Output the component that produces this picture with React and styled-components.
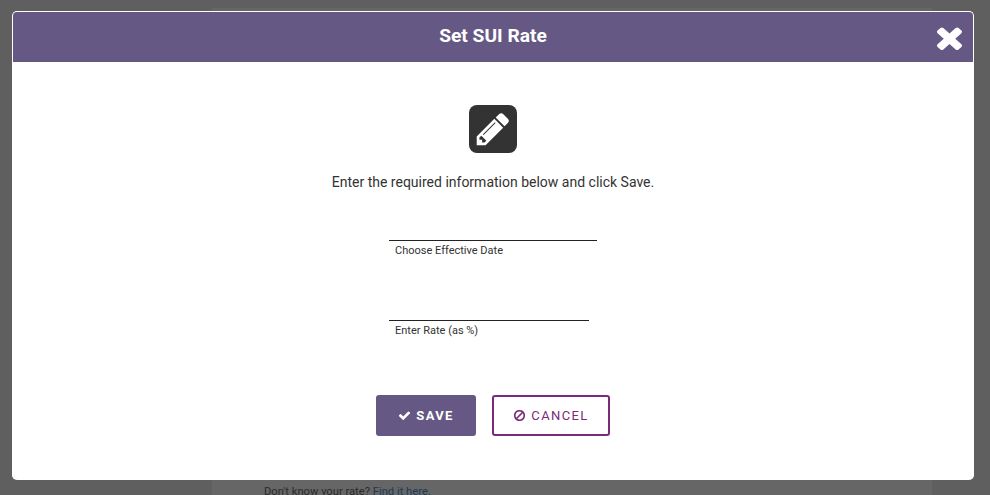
import React from "react";
import styled, { createGlobalStyle } from "styled-components";

const Global = createGlobalStyle`
  html, body { margin: 0; padding: 0; background: #5f5f5f; }
  body { font-family: Roboto, "Liberation Sans", sans-serif; overflow: hidden; }
`;

const Page = styled.div`
  position: relative;
  width: 990px;
  height: 495px;
  overflow: hidden;
  background: #5f5f5f;
`;

const BackPanel = styled.div`
  margin: 8px 0 0 212px;
  width: 720px;
  height: 487px;
  background: #666666;
  display: flex;
  flex-direction: column;
  justify-content: flex-end;
`;

const BackNote = styled.p`
  margin: 0 0 -4px 52px;
  font-size: 11.2px;
  line-height: 14px;
  color: #2b2b2b;
`;

const BackLink = styled.span`
  color: #1c3a57;
`;

const Modal = styled.div`
  position: absolute;
  left: 12px;
  top: 11px;
  width: 962px;
  height: 469px;
  box-sizing: border-box;
  border: 1px solid #fff;
  border-bottom: none;
  background: #fff;
  border-radius: 5px;
  overflow: hidden;
  display: flex;
  flex-direction: column;
`;

const Header = styled.header`
  position: relative;
  height: 50px;
  flex: none;
  background: #655885;
  display: flex;
  align-items: center;
  justify-content: center;
`;

const Title = styled.h1`
  margin: 0 0 3px;
  font-size: 19.2px;
  font-weight: 700;
  color: #fff;
  line-height: 24px;
`;

const CloseIcon = styled.svg`
  position: absolute;
  right: 11px;
  top: 13px;
  width: 25px;
  height: 25px;
  fill: #fff;
`;

const Body = styled.main`
  flex: 1;
  display: flex;
  flex-direction: column;
  align-items: center;
  padding-top: 43px;
`;

const IconTile = styled.div`
  width: 48px;
  height: 48px;
  border-radius: 8px;
  background: #333333;
  display: flex;
  align-items: center;
  justify-content: center;
`;

const PencilIcon = styled.svg`
  width: 38px;
  height: 38px;
  fill: #fff;
`;

const Intro = styled.p`
  margin: 21px 0 0;
  font-size: 14px;
  line-height: 17px;
  color: #333;
`;

const Form = styled.div`
  width: 208px;
  margin-top: 49px;
  display: flex;
  flex-direction: column;
  gap: 62px;
`;

const Field = styled.div`
  width: ${(p) => p.$width}px;
  border-top: 1px solid #222;
`;

const FieldLabel = styled.label`
  display: block;
  padding: 2px 0 0 6px;
  font-size: 11px;
  line-height: 15px;
  color: #333;
`;

const Actions = styled.div`
  display: flex;
  gap: 16px;
  margin-top: 57px;
`;

const Button = styled.button`
  height: 41px;
  box-sizing: border-box;
  border-radius: 3px;
  font-family: Roboto, "Liberation Sans", sans-serif;
  font-size: 13px;
  display: flex;
  align-items: center;
  justify-content: center;
  gap: 5px;
  padding: 0;
`;

const SaveButton = styled(Button)`
  width: 100px;
  border: none;
  background: #655885;
  color: #fff;
  font-weight: 700;
  letter-spacing: 1.35px;
`;

const CancelButton = styled(Button)`
  width: 118px;
  border: 2px solid #7a2a77;
  background: #fff;
  color: #7a2a77;
  font-weight: 400;
  letter-spacing: 1.4px;
`;

const ButtonIcon = styled.svg`
  width: 13px;
  height: 13px;
  fill: currentColor;
`;

export default function App() {
  return (
    <Page>
      <Global />
      <BackPanel>
        <BackNote>
          Don't know your rate? <BackLink>Find it here.</BackLink>
        </BackNote>
      </BackPanel>
      <Modal>
        <Header>
          <Title>Set SUI Rate</Title>
          <CloseIcon viewBox="302 238 1188 1316" preserveAspectRatio="none">
            <path d="M1490 1322q0 40-28 68l-136 136q-28 28-68 28t-68-28l-294-294-294 294q-28 28-68 28t-68-28l-136-136q-28-28-28-68t28-68l294-294-294-294q-28-28-28-68t28-68l136-136q28-28 68-28t68 28l294 294 294-294q28-28 68-28t68 28l136 136q28 28 28 68t-28 68l-294 294 294 294q28 28 28 68z" />
          </CloseIcon>
        </Header>
        <Body>
          <IconTile>
            <PencilIcon viewBox="0 0 1792 1792">
              <path d="M491 1536l91-91-235-235-91 91v107h128v128h107zm523-928q0-22-22-22-10 0-17 7l-542 542q-7 7-7 17 0 22 22 22 10 0 17-7l542-542q7-7 7-17zm-54-192l416 416-832 832h-416v-416zm683 96q0 53-37 90l-166 166-416-416 166-165q36-38 90-38 53 0 91 38l235 234q37 39 37 91z" />
            </PencilIcon>
          </IconTile>
          <Intro>Enter the required information below and click Save.</Intro>
          <Form>
            <Field $width={208}>
              <FieldLabel>Choose Effective Date</FieldLabel>
            </Field>
            <Field $width={200}>
              <FieldLabel>Enter Rate (as %)</FieldLabel>
            </Field>
          </Form>
          <Actions>
            <SaveButton>
              <ButtonIcon viewBox="0 0 1792 1792">
                <path d="M1671 566q0 40-28 68l-724 724-136 136q-28 28-68 28t-68-28l-136-136-362-362q-28-28-28-68t28-68l136-136q28-28 68-28t68 28l294 295 656-657q28-28 68-28t68 28l136 136q28 28 28 68z" />
              </ButtonIcon>
              SAVE
            </SaveButton>
            <CancelButton>
              <ButtonIcon viewBox="0 0 1792 1792">
                <path d="M1440 893q0-161-87-295l-754 753q137 89 297 89 111 0 211.5-43.5t173.5-116.5 116-174.5 43-212.5zm-999 299l755-754q-135-91-300-91-148 0-273 73t-198 199-73 274q0 162 89 299zm1223-299q0 157-61 300t-163.5 246-245 164-298.5 61-298.5-61-245-164-163.5-246-61-300 61-299.5 163.5-245.5 245-164 298.5-61 298.5 61 245 164 163.5 245.5 61 299.5z" />
              </ButtonIcon>
              CANCEL
            </CancelButton>
          </Actions>
        </Body>
      </Modal>
    </Page>
  );
}
